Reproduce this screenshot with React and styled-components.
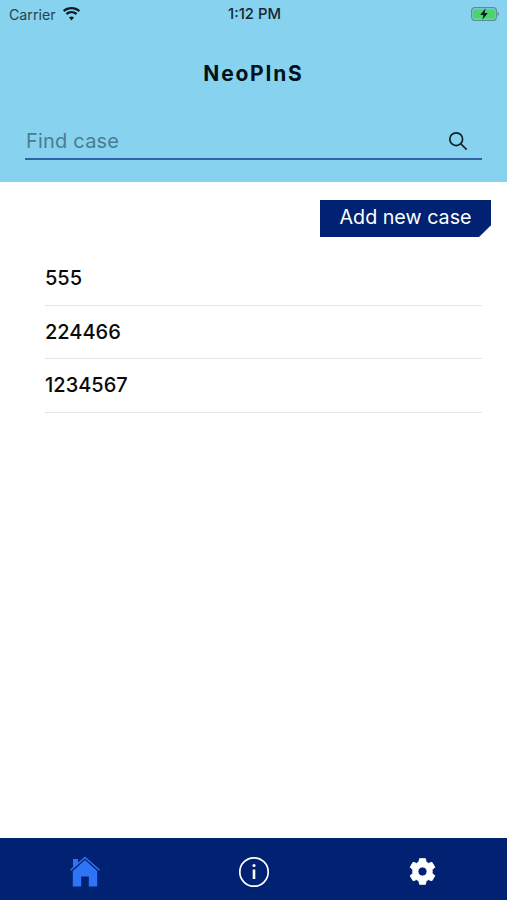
import React from 'react';
import styled, { createGlobalStyle } from 'styled-components';

const Global = createGlobalStyle`
    html, body {
        margin: 0;
        padding: 0;
        background: #fff;
    }
    * {
        box-sizing: border-box;
    }
`

const Page = styled.div`
    width: 507px;
    height: 900px;
    display: flex;
    flex-direction: column;
    font-family: "Inter", "Liberation Sans", sans-serif;
    color: #111;
    overflow: hidden;
`

const Header = styled.header`
    height: 182px;
    background: #87d3ef;
    display: flex;
    flex-direction: column;
`

const StatusBar = styled.div`
    height: 28px;
    padding: 0 7px 0 9px;
    display: grid;
    grid-template-columns: 1fr auto 1fr;
    align-items: center;
`

const Carrier = styled.div`
    display: flex;
    align-items: center;
    gap: 6px;
    font-size: 14.2px;
    color: #26404e;
`

const Clock = styled.div`
    font-size: 14.8px;
    font-weight: 500;
    color: #16262e;
`

const Battery = styled.div`
    display: flex;
    justify-content: flex-end;
`

const Title = styled.h1`
    margin: 34px 0 0;
    text-align: center;
    font-size: 21px;
    line-height: 24px;
    font-weight: 700;
    letter-spacing: 1.8px;
    color: #04101a;
`

const SearchRow = styled.div`
    margin: 39px 25px 0;
    height: 35px;
    display: flex;
    align-items: center;
    justify-content: space-between;
    padding: 0 14px 2px 1px;
    border-bottom: 2px solid #2f64a8;
`

const Placeholder = styled.span`
    font-size: 20px;
    letter-spacing: 0.2px;
    color: #4a7c90;
`

const Content = styled.main`
    flex: 1;
    display: flex;
    flex-direction: column;
    padding: 18px 16px 0 45px;
`

const AddButton = styled.button`
    align-self: flex-end;
    width: 171px;
    height: 37px;
    border: none;
    padding: 0 0 3px;
    background: #012172;
    color: #fff;
    font-family: inherit;
    font-size: 19.7px;
    clip-path: polygon(0 0, 100% 0, 100% 68%, 93% 100%, 0 100%);
`

const CaseList = styled.ul`
    list-style: none;
    margin: 15px 9px 0 0;
    padding: 0;
`

const CaseRow = styled.li`
    height: 53.6px;
    display: flex;
    align-items: center;
    font-size: 20px;
    font-weight: 500;
    color: #0a0a0a;
    border-bottom: 1px solid #e6e6e6;
`

const TabBar = styled.nav`
    height: 62px;
    background: #012172;
    display: grid;
    grid-template-columns: repeat(3, 1fr);
    align-items: center;
    justify-items: center;
    padding-top: 5px;
`

const cases = ['555', '224466', '1234567']

const WifiIcon = () => (
    <svg width="19" height="14" viewBox="0 0 19 14">
        <path fill="#0d1c26" d="M9.5 2.2c2.7 0 5.1 1 7 2.8l1.6-1.7C15.8 1.1 12.8 0 9.5 0S3.2 1.1.9 3.3L2.5 5c1.9-1.8 4.3-2.8 7-2.8zM9.5 6.2c1.6 0 3.1.6 4.2 1.7l1.6-1.7C13.8 4.7 11.7 3.9 9.5 3.9s-4.3.8-5.8 2.3l1.6 1.7c1.1-1.1 2.6-1.7 4.2-1.7zM9.5 9.6c-1 0-1.8.4-2.5 1l2.5 2.8 2.5-2.8c-.7-.6-1.5-1-2.5-1z" />
    </svg>
)

const BatteryIcon = () => (
    <svg width="29" height="14" viewBox="0 0 29 14">
        <rect x="0.7" y="0.7" width="24.6" height="12.6" rx="3" fill="none" stroke="#5b8f8a" strokeWidth="1.3" />
        <rect x="2.2" y="2.2" width="21.6" height="9.6" rx="1.6" fill="#4cd468" />
        <path fill="#5b8f8a" d="M26.5 5v4c.9-.3 1.5-1.1 1.5-2s-.6-1.7-1.5-2z" />
        <path fill="#0d1c26" d="M14.6 1.2 9.2 8h3.2l-1 4.8 5.4-6.8h-3.2z" />
    </svg>
)

const SearchIcon = () => (
    <svg width="20" height="20" viewBox="0 0 20 20" fill="none" stroke="#10222c" strokeWidth="1.7" strokeLinecap="round">
        <circle cx="8.2" cy="8.2" r="6.4" />
        <path d="M13 13l5.2 5.2" />
    </svg>
)

const HomeIcon = () => (
    <svg width="32" height="32" viewBox="0 0 32 32">
        <path fill="#2f74f6" d="M16 4 3.8 14.9v15.6h8.4v-10.1h7.6v10.1h8.4V14.9z" />
        <path fill="none" stroke="#2f74f6" strokeWidth="1.5" d="M1.5 14.3 16 1.5l14.500 12.800" />
        <path fill="#2f74f6" d="M4 3h5v4.5l-5 4.3z" />
    </svg>
)

const InfoIcon = () => (
    <svg width="32" height="32" viewBox="0 0 32 32" fill="none" stroke="#fff">
        <circle cx="16" cy="16" r="14.2" strokeWidth="1.7" />
        <path d="M16 13.5v9.500" strokeWidth="2.6" />
        <circle cx="16" cy="9.500" r="1.600" fill="#fff" stroke="none" />
    </svg>
)

const GearIcon = () => (
    <svg width="29" height="29" viewBox="0 0 24 24">
        <path fill="#fff" stroke="#fff" strokeWidth="0.8" strokeLinejoin="round" fillRule="evenodd" d="M14.4 1.4H9.6L9 4.2a8.2 8.2 0 0 0-1.900 1.100L4.200 4.400 1.800 8.500l2.300 1.900a8.200 8.200 0 0 0 0 3.200l-2.300 1.900 2.400 4.100 2.900-.9a8.200 8.200 0 0 0 1.900 1.100l.6 2.800h4.800l.6-2.800a8.200 8.200 0 0 0 1.900-1.100l2.900.9 2.400-4.100-2.300-1.900a8.200 8.200 0 0 0 0-3.200l2.300-1.900-2.400-4.100-2.900.9a8.200 8.200 0 0 0-1.900-1.100zM12 8.200a3.800 3.800 0 1 1 0 7.600 3.800 3.800 0 0 1 0-7.600z" />
    </svg>
)

const App = () => {
    return (
        <Page>
            <Global />
            <Header>
                <StatusBar>
                    <Carrier>Carrier <WifiIcon /></Carrier>
                    <Clock>1:12 PM</Clock>
                    <Battery><BatteryIcon /></Battery>
                </StatusBar>
                <Title>NeoPInS</Title>
                <SearchRow>
                    <Placeholder>Find case</Placeholder>
                    <SearchIcon />
                </SearchRow>
            </Header>
            <Content>
                <AddButton>Add new case</AddButton>
                <CaseList>
                    {cases.map((c) => <CaseRow key={c}>{c}</CaseRow>)}
                </CaseList>
            </Content>
            <TabBar>
                <HomeIcon />
                <InfoIcon />
                <GearIcon />
            </TabBar>
        </Page>
    )
}

export default App;
